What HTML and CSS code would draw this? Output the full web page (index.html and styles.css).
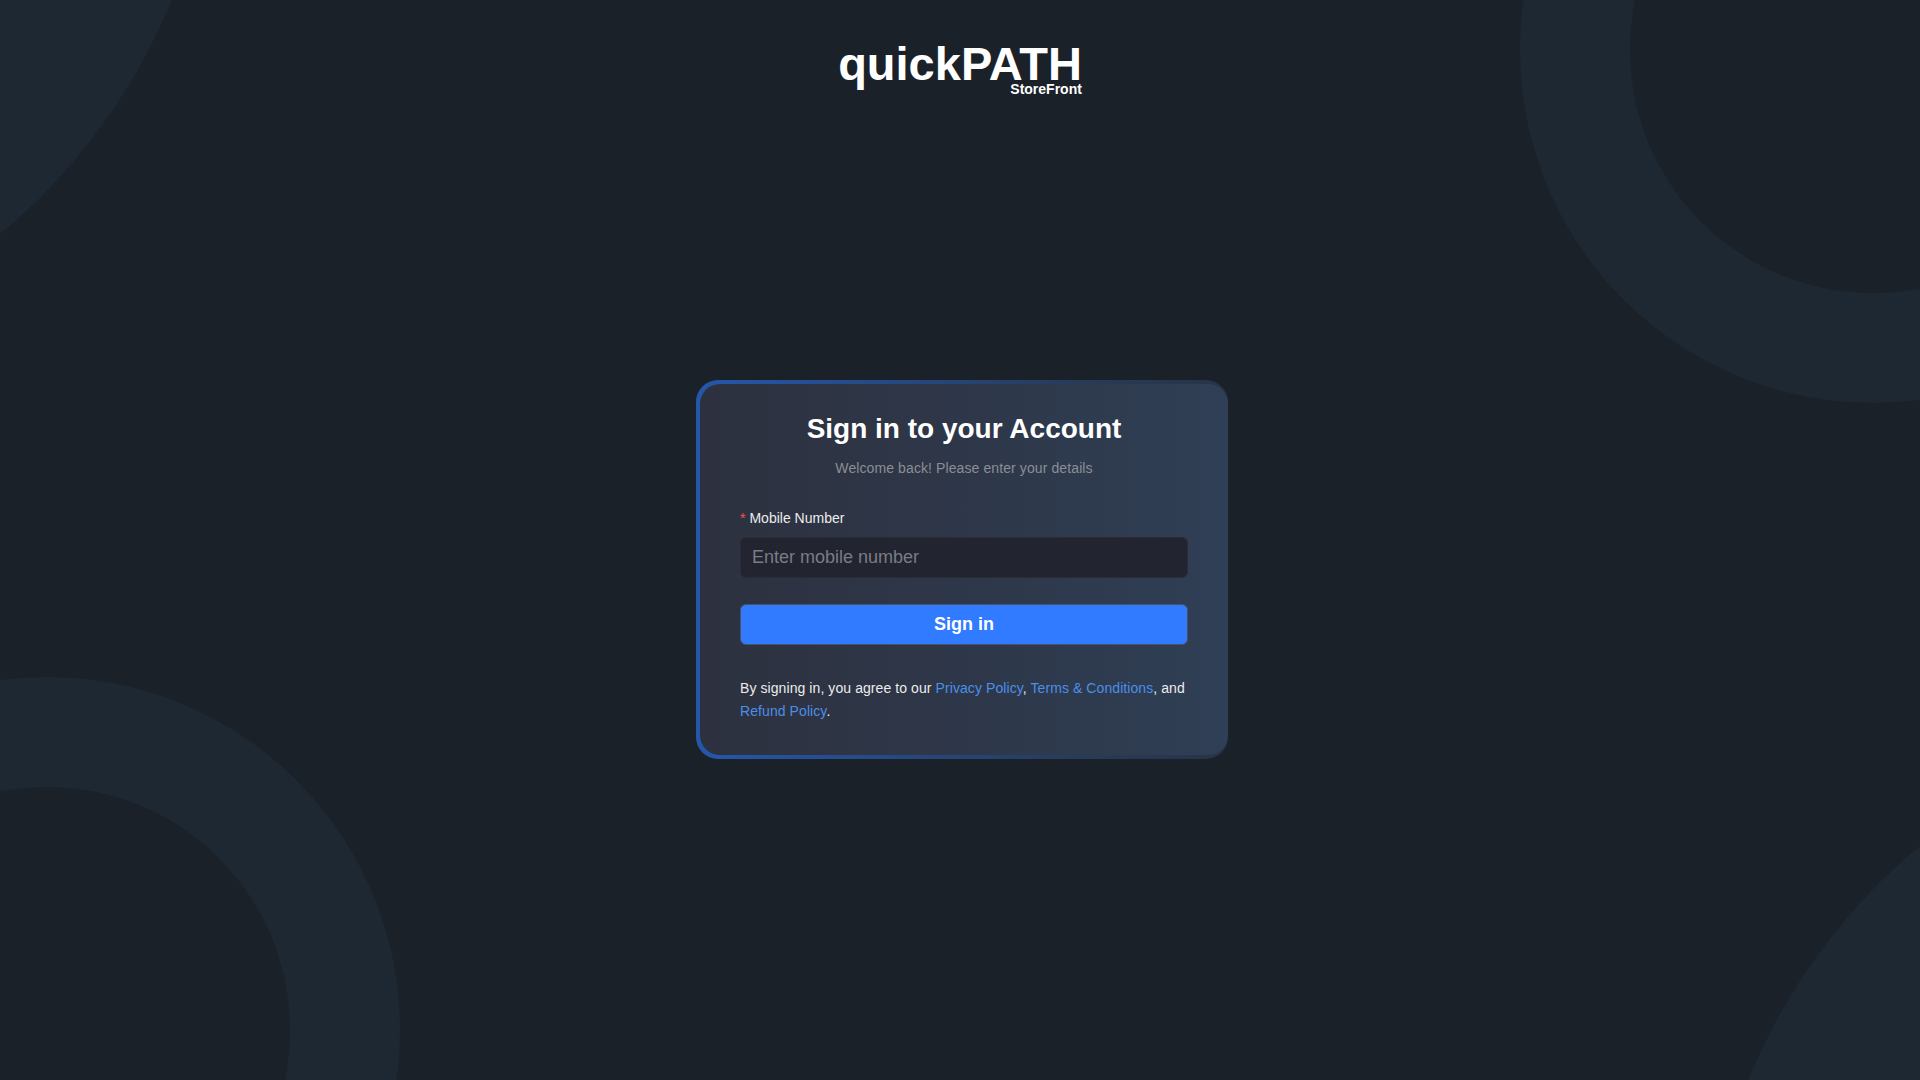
FILE: index.html
```html
<!DOCTYPE html>
<html lang="en">
<head>
    <meta charset="UTF-8">
    <meta name="viewport" content="width=device-width, initial-scale=1.0">
    <title>quickPATH StoreFront - Sign in</title>
    <link rel="stylesheet" href="styles.css">
</head>
<body>
    <!-- Decorative background shapes -->
    <div class="shape shape-blob-tl"></div>
    <div class="shape shape-ring-tr"></div>
    <div class="shape shape-ring-bl"></div>
    <div class="shape shape-blob-br"></div>

    <header class="brand">
        <div class="brand-logo">
            <span class="brand-name">quickPATH</span>
            <span class="brand-sub">StoreFront</span>
        </div>
    </header>

    <main class="auth">
        <div class="card-frame">
            <form class="card" onsubmit="return false;">
                <h1 class="card-title">Sign in to your Account</h1>
                <p class="card-subtitle">Welcome back! Please enter your details</p>

                <div class="form-item">
                    <label class="form-label" for="mobile"><span class="required">*</span>Mobile Number</label>
                    <input class="form-input" id="mobile" type="tel" placeholder="Enter mobile number">
                </div>

                <button class="btn-primary" type="submit">Sign in</button>

                <p class="terms">
                    By signing in, you agree to our <a href="#">Privacy Policy</a>, <a href="#">Terms &amp; Conditions</a>, and <a href="#">Refund Policy</a>.
                </p>
            </form>
        </div>
    </main>
</body>
</html>
```
FILE: styles.css
```css
html, body {
    margin: 0;
    height: 100%;
}

body {
    position: relative;
    overflow: hidden;
    background-color: #1b2129;
    font-family: "Liberation Sans", Arial, sans-serif;
    color: #ffffff;
}

/* Background shapes */
.shape {
    position: absolute;
    border-radius: 50%;
    z-index: 0;
}

.shape-ring-tr,
.shape-ring-bl {
    width: 706px;
    height: 706px;
    box-sizing: border-box;
    border: 110px solid #1e2832;
}

.shape-ring-tr {
    left: 1520px;
    top: -303px;
}

.shape-ring-bl {
    left: -306px;
    top: 677px;
}

.shape-blob-tl,
.shape-blob-br {
    width: 1192px;
    height: 1192px;
    background-color: #1e2832;
}

.shape-blob-tl {
    left: -976px;
    top: -821px;
}

.shape-blob-br {
    left: 1704px;
    top: 709px;
}

/* Brand */
.brand {
    position: relative;
    z-index: 1;
    display: flex;
    justify-content: center;
    padding-top: 40px;
}

.brand-logo {
    display: flex;
    flex-direction: column;
    align-items: flex-end;
}

.brand-name {
    font-size: 47px;
    font-weight: 700;
    line-height: 1;
}

.brand-sub {
    font-size: 14px;
    font-weight: 700;
    line-height: 1;
    margin-top: -5px;
}

/* Sign in card */
.auth {
    position: relative;
    z-index: 1;
    display: flex;
    justify-content: center;
    padding-top: 284px;
}

.card-frame {
    margin-left: 4px;
    padding: 4px 0 4px 4px;
    border-radius: 22px;
    background: linear-gradient(90deg, #2457ab 0%, #26467a 45%, #283a55 75%, #273447 100%);
}

.card {
    width: 528px;
    box-sizing: border-box;
    padding: 28px 40px 32px;
    border-radius: 20px;
    background: linear-gradient(90deg, #2d313f 0%, #2e3749 50%, #2f3f55 100%);
}

.card-title {
    margin: 0 0 11px;
    font-size: 28px;
    line-height: 1.2;
    font-weight: 700;
    text-align: center;
}

.card-subtitle {
    margin: 0 0 28px;
    font-size: 14px;
    line-height: 22px;
    letter-spacing: 0.1px;
    color: #8b8e95;
    text-align: center;
}

.form-item {
    margin-bottom: 26px;
}

.form-label {
    display: block;
    margin-bottom: 8px;
    font-size: 14px;
    line-height: 22px;
    color: #ececec;
}

.required {
    color: #ff4d4f;
    margin-right: 4px;
}

.form-input {
    display: block;
    width: 100%;
    height: 41px;
    box-sizing: border-box;
    padding: 0 11px;
    background-color: #22242f;
    border: 1px solid #2a2d38;
    border-radius: 6px;
    font-family: inherit;
    font-size: 18px;
    color: #ffffff;
    outline: none;
}

.form-input::placeholder {
    color: #7a7d85;
}

.btn-primary {
    display: block;
    width: 100%;
    height: 41px;
    background-color: #307bff;
    border: 1px solid #4a5366;
    border-radius: 6px;
    font-family: inherit;
    font-size: 18px;
    font-weight: 700;
    color: #ffffff;
    cursor: pointer;
}

.terms {
    margin: 32px 0 0;
    font-size: 14px;
    line-height: 23px;
    letter-spacing: 0.08px;
    color: #ececec;
}

.terms a {
    color: #4b8fe8;
    text-decoration: none;
}
```
